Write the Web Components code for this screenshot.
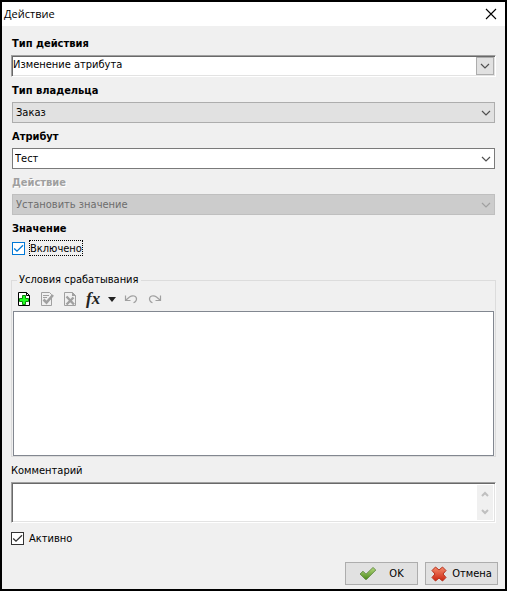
<!DOCTYPE html>
<html lang="ru">
<head>
<meta charset="utf-8">
<title>Действие</title>
<style>
  body {
    margin: 0;
    font: 11px/14px "DejaVu Sans Condensed", "Liberation Sans", sans-serif;
    color: #000;
  }
</style>
</head>
<body>

<template id="window-template">
  <style>
    :host {
      display: flex;
      flex-direction: column;
      box-sizing: border-box;
      min-height: 100vh;
      border: 2px solid #000;
      background: #f0f0f0;
    }

    header {
      display: flex;
      align-items: center;
      justify-content: space-between;
      height: 24px;
      padding: 0 3px 0 2px;
      background: #fff;
    }

    h1 {
      margin: 0;
      font: 11px/16px "Open Sans", "Noto Sans", sans-serif;
    }

    header button {
      display: flex;
      padding: 5px;
      border: 0;
      background: none;
    }

    main {
      display: flex;
      flex: 1;
      flex-direction: column;
      padding: 4px 9px 0;
    }

    footer {
      display: flex;
      justify-content: flex-end;
      gap: 7px;
      padding: 12px 7px 4px;
    }
  </style>
  <header>
    <h1></h1>
    <button type="button" aria-label="Закрыть">
      <svg width="12" height="12" viewBox="0 0 12 12"><path d="M1 1L11 11M11 1L1 11" stroke="#000" stroke-width="1.1"/></svg>
    </button>
  </header>
  <main><slot></slot></main>
  <footer><slot name="buttons"></slot></footer>
</template>

<template id="select-template">
  <style>
    :host {
      display: block;
    }

    label {
      display: block;
      padding: 2px 1px 0;
      font-weight: bold;
      line-height: 23px;
    }

    .box {
      display: flex;
      position: relative;
      box-sizing: border-box;
      height: 21px;
      margin: 0 1px;
      border: 1px solid #adadad;
      background: #e1e1e1;
    }

    select {
      flex: 1;
      min-width: 0;
      margin: 0;
      padding: 0 20px 0 3px;
      border: 0;
      outline: 0;
      appearance: none;
      background: none;
      color: inherit;
      font: inherit;
    }

    .arrow {
      display: flex;
      position: absolute;
      top: 0;
      right: 0;
      bottom: 0;
      align-items: center;
      justify-content: center;
      width: 16px;
      color: #505050;
      pointer-events: none;
    }

    :host([kind="edit"]) .box {
      border-color: #7a7a7a;
      background: #fff;
    }

    :host([kind="edit"]) select {
      padding-left: 2px;
    }

    :host([kind="sunken"]) .box {
      height: 22px;
      margin: 0;
      border-color: #a0a0a0 #fff #fff #a0a0a0;
      background: #fff;
      box-shadow: inset 1px 1px #696969, inset -1px -1px #e3e3e3;
    }

    :host([kind="sunken"]) select {
      padding: 0 20px 3px 1px;
    }

    :host([kind="sunken"]) .arrow {
      top: 1px;
      right: 1px;
      bottom: 1px;
      border: 1px solid #adadad;
      background: #e1e1e1;
    }

    :host([disabled]) label {
      color: #a0a0a0;
      text-shadow: 1px 1px #fff;
    }

    :host([disabled]) .box {
      border-color: #bfbfbf;
      background: #ccc;
    }

    :host([disabled]) select {
      color: #6d6d6d;
      opacity: 1;
    }

    :host([disabled]) .arrow {
      color: #a0a0a0;
    }
  </style>
  <label for="select"></label>
  <div class="box">
    <select id="select"></select>
    <span class="arrow">
      <svg width="10" height="6" viewBox="0 0 10 6"><path d="M1 1L5 5L9 1" fill="none" stroke="currentColor" stroke-width="1.2"/></svg>
    </span>
  </div>
</template>

<template id="check-template">
  <style>
    :host {
      display: flex;
    }

    label {
      display: flex;
      align-items: center;
      gap: 4px;
    }

    .tick {
      display: grid;
    }

    input,
    svg {
      grid-area: 1 / 1;
    }

    input {
      box-sizing: border-box;
      width: 13px;
      height: 13px;
      margin: 0;
      border: 1px solid #333;
      outline: 0;
      appearance: none;
      background: #fff;
    }

    svg {
      color: #333;
      pointer-events: none;
      visibility: hidden;
    }

    input:checked + svg {
      visibility: visible;
    }

    .text {
      padding-top: 1px;
      border: 1px solid transparent;
      line-height: 13px;
    }

    :host([active]) input {
      border-color: #0078d7;
    }

    :host([active]) svg {
      color: #0078d7;
    }

    :host([active]) .text {
      border: 1px dotted #000;
    }
  </style>
  <label>
    <span class="tick">
      <input type="checkbox" checked>
      <svg width="13" height="13" viewBox="0 0 13 13"><path d="M2.2 6.5L5 9.2L11 3.2" fill="none" stroke="currentColor" stroke-width="1.3"/></svg>
    </span>
    <span class="text"><slot></slot></span>
  </label>
</template>

<template id="conditions-template">
  <style>
    :host {
      display: block;
    }

    fieldset {
      min-width: 0;
      margin: 0;
      padding: 0;
      border: 1px solid #dcdcdc;
    }

    legend {
      margin-left: 5px;
      padding: 0 2px;
    }

    .toolbar {
      display: flex;
      align-items: center;
      height: 24px;
      padding-left: 1px;
    }

    button {
      display: flex;
      align-items: center;
      padding: 0 4px;
      border: 0;
      background: none;
      color: #222;
    }

    .function {
      gap: 8px;
      font: italic bold 17px/20px "Liberation Serif", serif;
    }

    .list {
      min-height: 143px;
      margin: 0 1px;
      border: 1px solid #828790;
      background: #fff;
    }
  </style>
  <fieldset>
    <legend></legend>
    <div class="toolbar">
      <button type="button" aria-label="Добавить">
        <svg width="15" height="16" viewBox="0 0 15 16">
          <path d="M1.5 1.5H9.5L12.5 4.5V14.5H1.5Z" fill="#fff" stroke="#000"/>
          <path d="M9.5 1.5V4.5H12.5" fill="none" stroke="#000"/>
          <path d="M5.5 4.5H8.5V7.5H11.5V10.5H8.5V13.5H5.5V10.5H2.5V7.5H5.5Z" fill="#2f2" stroke="#0a8a0a"/>
        </svg>
      </button>
      <button type="button" aria-label="Изменить" disabled>
        <svg width="15" height="16" viewBox="0 0 15 16">
          <path d="M1.5 1.5H9.5L11.5 3.5V14.5H1.5Z" fill="none" stroke="#a0a0a0"/>
          <path d="M3 4.5H9M3 6.5H7" stroke="#a0a0a0"/>
          <path d="M3.5 8.5L6.5 11.5L13 4" fill="none" stroke="#a0a0a0" stroke-width="2.6"/>
        </svg>
      </button>
      <button type="button" aria-label="Удалить" disabled>
        <svg width="15" height="16" viewBox="0 0 15 16">
          <path d="M1.5 1.5H9.5L12.5 4.5V14.5H1.5Z" fill="none" stroke="#a0a0a0"/>
          <path d="M9 1V5H13Z" fill="#a0a0a0"/>
          <path d="M3.5 5.5L11 13.5M10.5 6.5L3.5 13.5" stroke="#a0a0a0" stroke-width="2.4"/>
        </svg>
      </button>
      <button type="button" class="function">
        fx
        <svg width="8" height="5" viewBox="0 0 8 5"><path d="M0 0H8L4 5Z" fill="#222"/></svg>
      </button>
      <button type="button" aria-label="Отменить" disabled>
        <svg width="15" height="16" viewBox="0 0 15 16"><path d="M1.5 4.5V9.5H6.5M2 9L5.5 6C8.5 3.8 12.8 4.8 12.5 8.3C12.3 10.3 11 11.3 9.5 11.8" fill="none" stroke="#a0a0a0" stroke-width="1.2"/></svg>
      </button>
      <button type="button" aria-label="Повторить" disabled>
        <svg width="15" height="16" viewBox="0 0 15 16"><path d="M13.5 4.5V9.5H8.5M13 9L9.5 6C6.5 3.8 2.2 4.8 2.5 8.3C2.7 10.3 4 11.3 5.5 11.8" fill="none" stroke="#a0a0a0" stroke-width="1.2"/></svg>
      </button>
    </div>
    <div class="list"></div>
  </fieldset>
</template>

<template id="memo-template">
  <style>
    :host {
      display: block;
      padding-bottom: 7px;
    }

    label {
      display: block;
      padding-top: 2px;
      line-height: 23px;
    }

    .box {
      display: flex;
      height: 37px;
      padding: 1px;
      border: 1px solid;
      border-color: #a0a0a0 #fff #fff #a0a0a0;
      background: #fff;
      box-shadow: inset 1px 1px #696969, inset -1px -1px #e3e3e3;
    }

    textarea {
      flex: 1;
      min-width: 0;
      margin: 1px;
      padding: 0;
      border: 0;
      outline: 0;
      background: none;
      font: inherit;
      resize: none;
    }

    .scroll {
      display: flex;
      flex-direction: column;
      justify-content: space-between;
      align-items: center;
      width: 16px;
      margin: 1px;
      padding: 6px 0 5px;
      box-sizing: border-box;
      background: #f0f0f0;
    }
  </style>
  <label for="memo"></label>
  <div class="box">
    <textarea id="memo"></textarea>
    <span class="scroll">
      <svg width="8" height="6" viewBox="0 0 8 6"><path d="M1 5L4 2L7 5" fill="none" stroke="#bfbfbf" stroke-width="2"/></svg>
      <svg width="8" height="6" viewBox="0 0 8 6"><path d="M1 1L4 4L7 1" fill="none" stroke="#bfbfbf" stroke-width="2"/></svg>
    </span>
  </div>
</template>

<template id="button-template">
  <style>
    :host {
      display: flex;
    }

    button {
      display: flex;
      align-items: center;
      justify-content: center;
      gap: 5px;
      box-sizing: border-box;
      width: 73px;
      height: 23px;
      padding: 0;
      border: 1px solid #adadad;
      background: #e1e1e1;
      color: inherit;
      font: inherit;
    }

    :host([wide]) button {
      gap: 12px;
    }
  </style>
  <button type="button"><slot name="icon"></slot><slot></slot></button>
</template>

<action-window caption="Действие">
  <action-select kind="sunken" caption="Тип действия" value="Изменение атрибута"></action-select>
  <action-select caption="Тип владельца" value="Заказ"></action-select>
  <action-select kind="edit" caption="Атрибут" value="Тест"></action-select>
  <action-select disabled caption="Действие" value="Установить значение"></action-select>
  <action-value caption="Значение"><action-check active>Включено</action-check></action-value>
  <action-conditions caption="Условия срабатывания"></action-conditions>
  <action-memo caption="Комментарий"></action-memo>
  <action-check>Активно</action-check>
  <action-button slot="buttons" wide>
    <svg slot="icon" width="18" height="16" viewBox="0 0 18 16">
      <defs><linearGradient id="green" x2="0" y2="1"><stop stop-color="#b5d97c"/><stop offset="1" stop-color="#4c8a1c"/></linearGradient></defs>
      <path d="M1 8L4 5.2L7 8.2L14 1.5L16.8 4L7.5 13.5H6.5Z" fill="url(#green)" stroke="#6b9150" stroke-linejoin="round"/>
    </svg>
    OK
  </action-button>
  <action-button slot="buttons">
    <svg slot="icon" width="16" height="16" viewBox="0 0 16 16">
      <defs><linearGradient id="red" x2="0" y2="1"><stop stop-color="#f58a6a"/><stop offset="1" stop-color="#cc2410"/></linearGradient></defs>
      <path d="M4.5 1L8 4L11.5 1L15 4.5L12 8L15 11.5L11.5 15L8 12L4.5 15L1 11.5L4 8L1 4.5Z" fill="url(#red)" stroke="#b5301c" stroke-linejoin="round"/>
    </svg>
    Отмена
  </action-button>
</action-window>

<script>
  /**
   * Base class that clones a template into the shadow root.
   */
  class ActionElement extends HTMLElement {
    /**
     * @param {string} templateId - The id of the template.
     */
    constructor (templateId) {
      super()
      this.attachShadow({ mode: 'open' })
        .appendChild(document.getElementById(templateId).content.cloneNode(true))
    }

    /**
     * Writes the caption attribute into an element of the shadow root.
     *
     * @param {string} selector - The element that shows the caption.
     */
    setCaption (selector) {
      this.shadowRoot.querySelector(selector).textContent = this.getAttribute('caption')
    }
  }

  customElements.define('action-window', class extends ActionElement {
    constructor () {
      super('window-template')
    }

    connectedCallback () {
      this.setCaption('h1')
      this.shadowRoot.querySelector('header button').addEventListener('click', () => this.remove())
    }
  })

  customElements.define('action-select', class extends ActionElement {
    constructor () {
      super('select-template')
    }

    connectedCallback () {
      this.setCaption('label')
      const select = this.shadowRoot.querySelector('select')
      select.replaceChildren(new Option(this.getAttribute('value')))
      select.disabled = this.hasAttribute('disabled')
    }
  })

  customElements.define('action-check', class extends ActionElement {
    constructor () {
      super('check-template')
    }
  })

  customElements.define('action-conditions', class extends ActionElement {
    constructor () {
      super('conditions-template')
    }

    connectedCallback () {
      this.setCaption('legend')
    }
  })

  customElements.define('action-memo', class extends ActionElement {
    constructor () {
      super('memo-template')
    }

    connectedCallback () {
      this.setCaption('label')
    }
  })

  customElements.define('action-button', class extends ActionElement {
    constructor () {
      super('button-template')
    }
  })

  /*
  * A bold heading over the control that edits the value.
  */
  customElements.define('action-value', class extends HTMLElement {
    constructor () {
      super()
      this.attachShadow({ mode: 'open' }).innerHTML = `
        <style>
          :host {
            display: block;
            padding: 0 1px 17px;
          }

          b {
            display: block;
            padding-top: 2px;
            line-height: 23px;
          }
        </style>
        <b></b>
        <slot></slot>
      `
    }

    connectedCallback () {
      this.shadowRoot.querySelector('b').textContent = this.getAttribute('caption')
    }
  })
</script>
</body>
</html>
